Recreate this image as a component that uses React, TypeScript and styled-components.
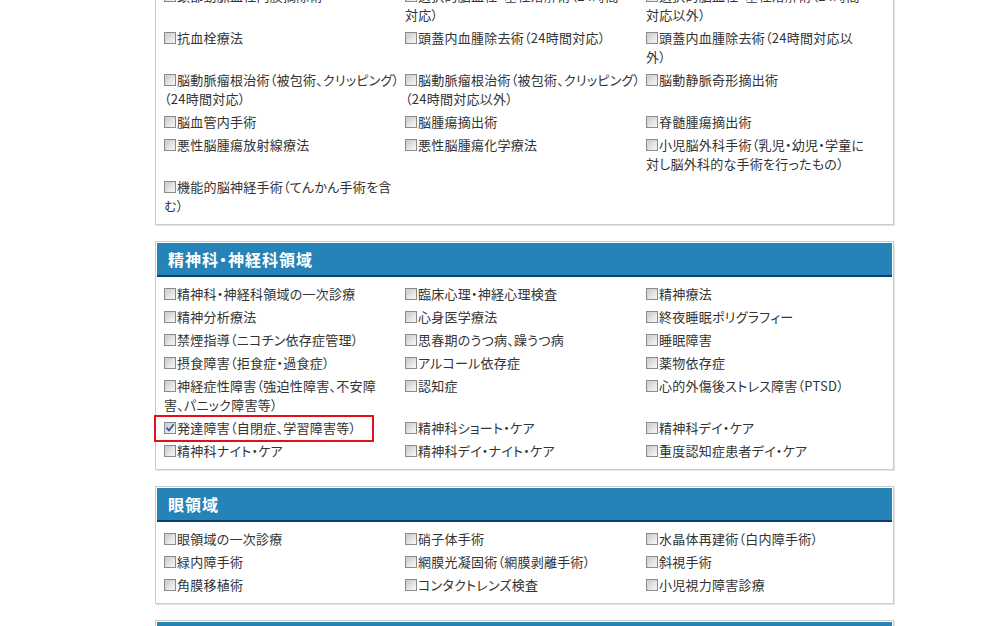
import React from "react";
import styled, { createGlobalStyle } from "styled-components";

const GlobalStyle = createGlobalStyle`
  html, body {
    margin: 0;
    padding: 0;
    background: #ffffff;
    overflow: hidden;
  }
  body {
    font-family: "Noto Sans CJK JP", "Noto Sans", sans-serif;
    color: #333333;
  }
`;

type ItemData = {
  lines: string[];
  checked?: boolean;
  highlight?: boolean;
};

type SectionData = {
  title: string;
  items: (ItemData | null)[];
};

const t = (...lines: string[]): ItemData => ({ lines });

const sections: SectionData[] = [
  {
    title: "脳神経外科領域",
    items: [
      t("頸部動脈血栓内膜摘除術"),
      t("選択的脳血栓・塞栓溶解術（24時間", "対応）"),
      t("選択的脳血栓・塞栓溶解術（24時間", "対応以外）"),
      t("抗血栓療法"),
      t("頭蓋内血腫除去術（24時間対応）"),
      t("頭蓋内血腫除去術（24時間対応以", "外）"),
      t("脳動脈瘤根治術（被包術、クリッピング）", "（24時間対応）"),
      t("脳動脈瘤根治術（被包術、クリッピング）", "（24時間対応以外）"),
      t("脳動静脈奇形摘出術"),
      t("脳血管内手術"),
      t("脳腫瘍摘出術"),
      t("脊髄腫瘍摘出術"),
      t("悪性脳腫瘍放射線療法"),
      t("悪性脳腫瘍化学療法"),
      t("小児脳外科手術（乳児・幼児・学童に", "対し脳外科的な手術を行ったもの）"),
      t("機能的脳神経手術（てんかん手術を含", "む）"),
      null,
      null,
    ],
  },
  {
    title: "精神科・神経科領域",
    items: [
      t("精神科・神経科領域の一次診療"),
      t("臨床心理・神経心理検査"),
      t("精神療法"),
      t("精神分析療法"),
      t("心身医学療法"),
      t("終夜睡眠ポリグラフィー"),
      t("禁煙指導（ニコチン依存症管理）"),
      t("思春期のうつ病、躁うつ病"),
      t("睡眠障害"),
      t("摂食障害（拒食症・過食症）"),
      t("アルコール依存症"),
      t("薬物依存症"),
      t("神経症性障害（強迫性障害、不安障", "害、パニック障害等）"),
      t("認知症"),
      t("心的外傷後ストレス障害（PTSD）"),
      { lines: ["発達障害（自閉症、学習障害等）"], checked: true, highlight: true },
      t("精神科ショート・ケア"),
      t("精神科デイ・ケア"),
      t("精神科ナイト・ケア"),
      t("精神科デイ・ナイト・ケア"),
      t("重度認知症患者デイ・ケア"),
    ],
  },
  {
    title: "眼領域",
    items: [
      t("眼領域の一次診療"),
      t("硝子体手術"),
      t("水晶体再建術（白内障手術）"),
      t("緑内障手術"),
      t("網膜光凝固術（網膜剥離手術）"),
      t("斜視手術"),
      t("角膜移植術"),
      t("コンタクトレンズ検査"),
      t("小児視力障害診療"),
    ],
  },
  {
    title: "耳鼻咽喉科領域",
    items: [t("耳鼻咽喉科領域の一次診療"), t("喉頭鏡検査"), t("耳管機能検査")],
  },
];

const Page = styled.main`
  display: flex;
  flex-direction: column;
  gap: 16px;
  width: 739px;
  margin: -57px 0 0 155px;
`;

const Panel = styled.section`
  box-sizing: border-box;
  border: 1px solid #cbcbcb;
  box-shadow: 1px 1px 0 #e4e4e4;
  padding: 1px;
  background: #ffffff;
`;

const PanelHeader = styled.h2`
  margin: 0;
  height: 32px;
  display: flex;
  align-items: center;
  padding: 0 0 0 11px;
  background: #2583b8;
  border-bottom: 2px solid #0c3d6d;
  color: #ffffff;
  font-size: 16px;
  font-weight: 700;
  font-feature-settings: "palt";
  letter-spacing: 1px;
`;

const ItemGrid = styled.div`
  display: grid;
  grid-template-columns: repeat(3, 241px);
  padding: 5px 0 6px 7px;
`;

const Item = styled.label`
  display: block;
  padding: 2px 0;
  font-size: 13px;
  line-height: 19px;
  white-space: nowrap;
  font-feature-settings: "palt";
  letter-spacing: 0.25px;
  color: #333333;
`;

const Inline = styled.span<{ $highlight?: boolean }>`
  position: relative;
  display: inline-block;

  &::after {
    content: "";
    display: ${(p) => (p.$highlight ? "block" : "none")};
    position: absolute;
    left: -10px;
    right: -18px;
    top: -3px;
    bottom: -5px;
    border: 2px solid #e3101a;
    pointer-events: none;
  }
`;

const Box = styled.span`
  display: inline-block;
  box-sizing: border-box;
  width: 12px;
  height: 12px;
  margin: 0 1px 0 0;
  vertical-align: -1px;
  border: 1px solid #8b8b8b;
  background: linear-gradient(135deg, #c4c4c4 0%, #e2e2e2 50%, #f7f7f7 100%);
  box-shadow: inset 1px 1px 0 #d6d6d6;
  position: relative;

  svg {
    position: absolute;
    left: 0;
    top: 0;
  }
`;

const CheckBox: React.FC<{ checked?: boolean }> = ({ checked }) => (
  <Box>
    {checked && (
      <svg width="10" height="10" viewBox="0 0 10 10">
        <path
          d="M2 5.2 L4 7.4 L8.2 2"
          fill="none"
          stroke="#2b4fa8"
          strokeWidth="1.7"
          strokeLinecap="square"
        />
      </svg>
    )}
  </Box>
);

const Cell: React.FC<{ item: ItemData | null }> = ({ item }) => {
  if (!item) return <Item as="div" />;
  return (
    <Item>
      {item.highlight ? (
        <Inline $highlight>
          <CheckBox checked={item.checked} />
          {item.lines[0]}
        </Inline>
      ) : (
        <>
          <CheckBox checked={item.checked} />
          {item.lines.map((line, i) => (
            <React.Fragment key={i}>
              {i > 0 && <br />}
              {line}
            </React.Fragment>
          ))}
        </>
      )}
    </Item>
  );
};

export default function App() {
  return (
    <>
      <GlobalStyle />
      <Page>
        {sections.map((s) => (
          <Panel key={s.title}>
            <PanelHeader>{s.title}</PanelHeader>
            <ItemGrid>
              {s.items.map((item, i) => (
                <Cell key={i} item={item} />
              ))}
            </ItemGrid>
          </Panel>
        ))}
      </Page>
    </>
  );
}
